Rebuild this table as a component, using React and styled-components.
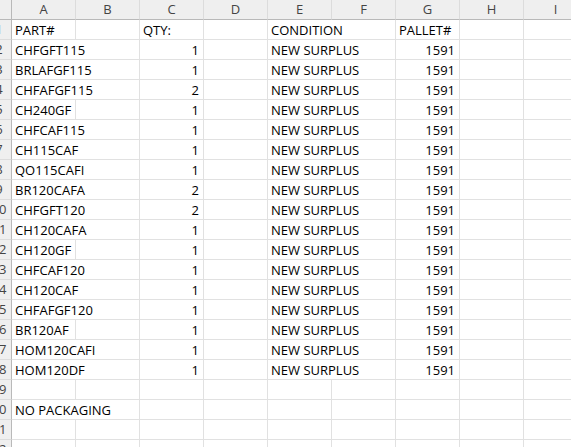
import React from "react"
import styled, { createGlobalStyle } from "styled-components"

const GlobalStyle = createGlobalStyle`
  html, body {
    margin: 0;
    padding: 0;
    background: #ffffff;
    overflow: hidden;
  }
  body {
    font-family: "Open Sans", "Liberation Sans", sans-serif;
  }
`

const Sheet = styled.div`
  width: 571px;
  height: 447px;
  overflow: hidden;
  background: #ffffff;
`

const Grid = styled.div`
  display: grid;
  grid-template-columns: 25px repeat(9, 64px);
  grid-auto-rows: 20px;
  margin-left: -13px;
  width: max-content;
`

const HeadCell = styled.div`
  box-sizing: border-box;
  background: #efefef;
  border-bottom: 1px solid #b9b9b9;
  border-right: 1px solid ${(p) => (p.$corner ? "#b9b9b9" : "#dcdcdc")};
  color: #444444;
  font-size: 13px;
  line-height: 19px;
  text-align: center;
`

const RowNum = styled.div`
  box-sizing: border-box;
  background: #efefef;
  border-bottom: 1px solid #dcdcdc;
  border-right: 1px solid #b9b9b9;
  color: #444444;
  font-size: 13px;
  line-height: 19px;
  text-align: center;
`

const Cell = styled.div`
  box-sizing: border-box;
  grid-column: span ${(p) => p.$span || 1};
  border-bottom: 1px solid #e1e1e1;
  border-right: 1px solid #e1e1e1;
  padding: 0 4px 0 3px;
  color: #000000;
  font-size: 13px;
  line-height: 19px;
  padding-top: 1px;
  line-height: 18px;
  text-align: ${(p) => (p.$num ? "right" : "left")};
  white-space: nowrap;
  overflow: hidden;
`

const letters = ["A", "B", "C", "D", "E", "F", "G", "H", "I"]

const parts = [
  ["CHFGFT115", 1],
  ["BRLAFGF115", 1],
  ["CHFAFGF115", 2],
  ["CH240GF", 1],
  ["CHFCAF115", 1],
  ["CH115CAF", 1],
  ["QO115CAFI", 1],
  ["BR120CAFA", 2],
  ["CHFGFT120", 2],
  ["CH120CAFA", 1],
  ["CH120GF", 1],
  ["CHFCAF120", 1],
  ["CH120CAF", 1],
  ["CHFAFGF120", 1],
  ["BR120AF", 1],
  ["HOM120CAFI", 1],
  ["HOM120DF", 1],
]

const rows = [
  ["PART#", "", "QTY:", "", "CONDITION", "", "PALLET#", "", ""],
  ...parts.map(([part, qty]) => [part, "", qty, "", "NEW SURPLUS", "", 1591, "", ""]),
  ["", "", "", "", "", "", "", "", ""],
  ["NO PACKAGING", "", "", "", "", "", "", "", ""],
  ["", "", "", "", "", "", "", "", ""],
  ["", "", "", "", "", "", "", "", ""],
]

// text that runs past its column into the empty cell next door
const overflows = (value, col) => {
  if (typeof value !== "string" || value === "") return false
  if (col === 0) return value.length >= 8
  if (col === 4) return true
  return false
}

const SheetRow = ({ index, values }) => {
  const cells = []
  let col = 0
  while (col < values.length) {
    const value = values[col]
    const span = overflows(value, col) && values[col + 1] === "" ? 2 : 1
    cells.push(
      <Cell key={col} $span={span} $num={typeof value === "number"}>
        {value}
      </Cell>
    )
    col += span
  }
  return (
    <>
      <RowNum>{index}</RowNum>
      {cells}
    </>
  )
}

const App = () => {
  return (
    <Sheet>
      <GlobalStyle />
      <Grid>
        <HeadCell $corner />
        {letters.map((l) => (
          <HeadCell key={l}>{l}</HeadCell>
        ))}
        {rows.map((values, i) => (
          <SheetRow key={i} index={i + 1} values={values} />
        ))}
      </Grid>
    </Sheet>
  )
}

export default App
